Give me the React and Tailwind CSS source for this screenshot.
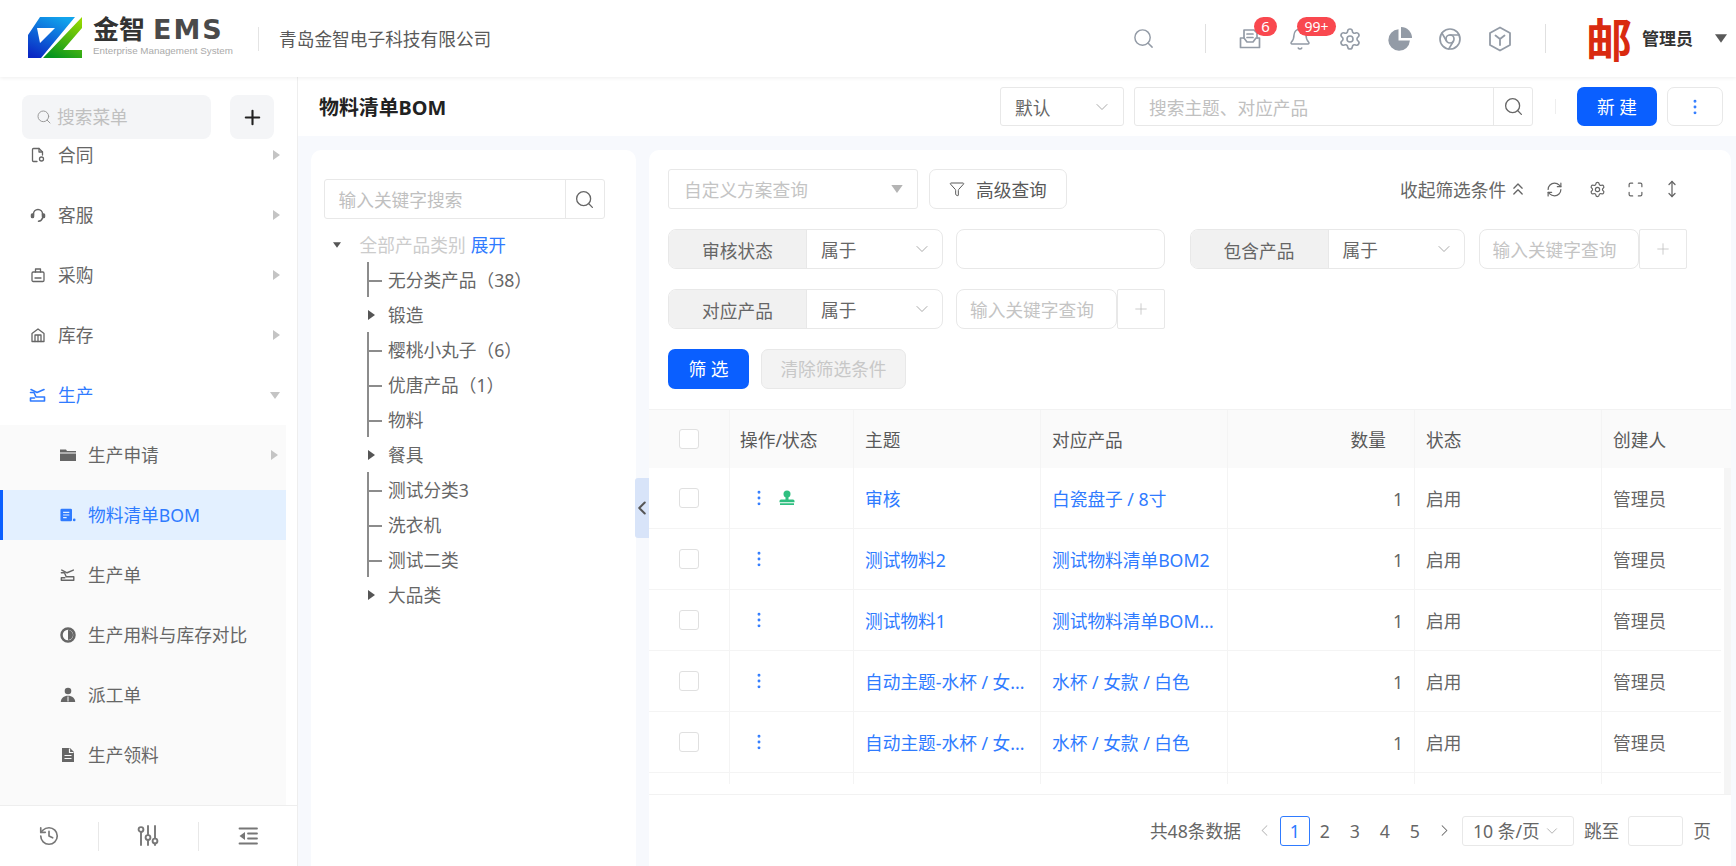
import React from "react";
import { Search, Bell, Settings, Chrome, History, ChevronDown, ChevronLeft, ChevronRight, ChevronsUp, RefreshCw, Maximize, MoveVertical, Filter, Plus, EllipsisVertical } from "lucide-react";

const G = "#939ba6";

function Logo() {
  return (
    <svg width="54" height="42" viewBox="0 0 54 42" className="shrink-0">
      <defs>
        <linearGradient id="lb" x1="0.7" y1="0" x2="0.2" y2="1"><stop offset="0" stopColor="#12a4ec" /><stop offset="1" stopColor="#0a28c4" /></linearGradient>
        <linearGradient id="lg" x1="0.8" y1="0" x2="0.3" y2="1"><stop offset="0" stopColor="#94d800" /><stop offset="1" stopColor="#06951f" /></linearGradient>
      </defs>
      <path fillRule="evenodd" d="M0 18 12 0H47L13 41H0ZM9 11H27L12 26Z" fill="url(#lb)" />
      <path d="M54 0V11L35 33H54V41H15Z" fill="url(#lg)" />
    </svg>
  );
}

function Inbox() {
  return (
    <svg width="24" height="24" viewBox="0 0 24 24" fill="none" stroke={G} strokeWidth="1.7" strokeLinejoin="round" strokeLinecap="round">
      <path d="M6 11V3h10l3 3v5" />
      <path d="M9 7h6M9 10.5h6" />
      <path d="M6 11H2.5v9.5h19V11H18l-3 4H9Z" />
    </svg>
  );
}
function Pie() {
  return (
    <svg width="26" height="26" viewBox="0 0 26 26" fill={G}>
      <path d="M11.5 3.2a10.8 10.8 0 1 0 11.4 11.4H11.5Z" />
      <path d="M14 1a11 11 0 0 1 11 11H14Z" />
    </svg>
  );
}
function HexY() {
  return (
    <svg width="24" height="26" viewBox="0 0 24 26" fill="none" stroke={G} strokeWidth="1.8" strokeLinejoin="round" strokeLinecap="round">
      <path d="M12 1.5 22 7v12l-10 5.5L2 19V7Z" />
      <path d="M7.5 9.5 12 13l4.5-3.5M12 13v6" />
    </svg>
  );
}

const sideProps = { width: 16, height: 16, viewBox: "0 0 16 16", fill: "none", stroke: "currentColor", strokeWidth: 1.3, strokeLinejoin: "round", strokeLinecap: "round" };
function IcContract() {
  return (
    <svg {...sideProps}>
      <path d="M7 14.5H3.5a1 1 0 0 1-1-1v-11a1 1 0 0 1 1-1H9l3.5 3.5v3" />
      <path d="M9 1.5V5h3.5" />
      <circle cx="11.5" cy="12" r="2" />
    </svg>
  );
}
function IcService() {
  return (
    <svg {...sideProps} strokeWidth="1.5">
      <path d="M3.5 8V7a4.5 4.5 0 0 1 9 0v1" />
      <path d="M12.5 11a4.500 4.500 0 0 1-4 3.200" />
      <rect x="1.500" y="7" width="2" height="3.500" rx="0.800" fill="currentColor" />
      <rect x="12.500" y="7" width="2" height="3.500" rx="0.800" fill="currentColor" />
    </svg>
  );
}
function IcBag() {
  return (
    <svg {...sideProps}>
      <rect x="2" y="5" width="12" height="9.500" rx="1.200" />
      <path d="M5.500 5V2h5v3M5 11h6" />
    </svg>
  );
}
function IcStore() {
  return (
    <svg {...sideProps}>
      <path d="M2 6.500 8 2l6 4.500v8H2Z" />
      <path d="M5 14.500V8h6v6.500M8 8v6.500" />
    </svg>
  );
}
function IcProd({ className }) {
  return (
    <svg width="18" height="16" viewBox="0 0 18 16" fill="none" stroke="currentColor" strokeWidth="1.6" strokeLinejoin="round" strokeLinecap="round" className={className}>
      <path d="M2 2.500 8 5.500l7-3" />
      <path d="M1.500 5.500h3.500l2 4.500h8.500v4H1.500v-3h4" />
    </svg>
  );
}
function IcFolder() {
  return (
    <svg width="16" height="16" viewBox="0 0 16 16" fill="currentColor">
      <path d="M0 2.500h6l1 1.500h9v1.500H0ZM0 6.500h16v7.500H0Z" />
    </svg>
  );
}
function IcBom() {
  return (
    <svg width="18" height="16" viewBox="0 0 18 16">
      <rect x="0.500" y="1" width="13" height="14" rx="1.500" fill="currentColor" />
      <path d="M3.500 5h7M3.500 8h7M3.500 11h4" stroke="#e3f0ff" strokeWidth="1.300" />
      <circle cx="16" cy="13.500" r="1.500" fill="currentColor" />
    </svg>
  );
}
function IcHalf() {
  return (
    <svg width="16" height="16" viewBox="0 0 16 16">
      <circle cx="8" cy="8" r="6.500" fill="#fafafa" stroke="currentColor" strokeWidth="2.500" />
      <path d="M8 3a5 5 0 0 1 0 10Z" fill="currentColor" />
    </svg>
  );
}
function IcPerson() {
  return (
    <svg width="16" height="16" viewBox="0 0 16 16" fill="currentColor">
      <circle cx="8" cy="4" r="3.300" />
      <path d="M.8 15c0-3.600 3-6.200 7.200-6.200s7.200 2.600 7.200 6.200Z" />
      <path d="M8 9.500v5" stroke="#fafafa" strokeWidth="1" />
    </svg>
  );
}
function IcStamp({ className }) {
  return (
    <svg width="16" height="16" viewBox="0 0 16 16" fill="currentColor" className={className}>
      <circle cx="8" cy="4" r="3.500" />
      <path d="M6.500 7h3v2.500H14a1.500 1.500 0 0 1 1.500 1.500v1.200H.5V11A1.500 1.500 0 0 1 2 9.500h4.500ZM1 13.300h14V15H1Z" />
    </svg>
  );
}
function IcDoc() {
  return (
    <svg width="16" height="16" viewBox="0 0 16 16">
      <path d="M2 1h8l4 4v10H2Z" fill="currentColor" />
      <path d="M9.500 1.500V5.500h4M4.500 8.500h7M4.500 11.500h7" stroke="#fafafa" strokeWidth="1.200" fill="none" />
    </svg>
  );
}
function IcSliders() {
  return (
    <svg width="22" height="24" viewBox="0 0 22 24" fill="none" stroke="#777" strokeWidth="1.900" strokeLinecap="round">
      <circle cx="4" cy="5.500" r="2.400" />
      <path d="M4 8v13" />
      <path d="M11 2v9" />
      <circle cx="11" cy="13.500" r="2.400" />
      <path d="M11 16v5" />
      <path d="M18 2v12" />
      <circle cx="18" cy="17" r="2.400" />
      <path d="M18 19.500V21" />
    </svg>
  );
}
function IcCollapse() {
  return (
    <svg width="20" height="20" viewBox="0 0 20 20" fill="none" stroke="#777" strokeWidth="1.800" strokeLinecap="round">
      <path d="M1.500 2.500h17.500M10 7.500h9M10 12.500h9M1.500 17.500h17.500" />
      <path d="M7 6v8L1.500 10Z" fill="#777" stroke="none" />
    </svg>
  );
}

function TriRight({ className = "text-[#c4c4c4]" }) {
  return <svg width="7" height="10" viewBox="0 0 7 10" fill="currentColor" className={className}><path d="M0 0l7 5-7 5Z" /></svg>;
}
function TriDown({ className = "text-[#c4c4c4]", w = 10, h = 7 }) {
  return <svg width={w} height={h} viewBox="0 0 10 7" fill="currentColor" className={className}><path d="M0 0h10L5 7Z" /></svg>;
}

function TopMenu({ icon, label, active, open }) {
  return (
    <div className={`h-[60px] flex items-center pl-[29px] pr-[17px] ${active ? "text-[#2f7bff]" : "text-[#666666]"}`}>
      <span className="w-[18px] flex justify-center">{icon}</span>
      <span className="ml-[11px]">{label}</span>
      <span className="ml-auto">{open ? <TriDown /> : <TriRight />}</span>
    </div>
  );
}
function SubMenu({ icon, label, arrow, active }) {
  return (
    <div className="h-[60px] flex items-center">
      <div className={`w-full flex items-center h-[50px] ${active ? "bg-[#e3f0ff] text-[#2f7bff] border-l-[3px] border-[#0a5fff] pl-[57px]" : "text-[#666666] pl-[60px]"} pr-[8px]`}>
        <span className="w-[16px] flex justify-center">{icon}</span>
        <span className="ml-[12px]">{label}</span>
        {arrow && <span className="ml-auto"><TriRight /></span>}
      </div>
    </div>
  );
}

function Sidebar() {
  return (
    <aside className="w-[298px] shrink-0 bg-white border-r border-[#eeeeee] flex flex-col">
      <div className="h-[62px] shrink-0 pt-[18px] pl-[22px] flex gap-[19px] bg-white relative z-10">
        <div className="w-[189px] h-[44px] rounded-[8px] bg-[#f4f5f7] flex items-center pl-[14px] text-[#c0c0c0]">
          <Search size={16} strokeWidth={1.5} className="text-[#9a9a9a]" />
          <span className="ml-[5px]">搜索菜单</span>
        </div>
        <div className="w-[44px] h-[44px] rounded-[8px] bg-[#f4f5f7] flex items-center justify-center">
          <Plus size={23} strokeWidth={2.2} className="text-[#222222]" />
        </div>
      </div>
      <div className="flex-1 overflow-hidden">
        <div className="-mt-[14px]">
          <TopMenu icon={<IcContract />} label="合同" />
          <TopMenu icon={<IcService />} label="客服" />
          <TopMenu icon={<IcBag />} label="采购" />
          <TopMenu icon={<IcStore />} label="库存" />
          <TopMenu icon={<IcProd />} label="生产" active open />
          <div className="w-[286px] bg-[#fafafa] h-[380px]">
            <SubMenu icon={<IcFolder />} label="生产申请" arrow />
            <SubMenu icon={<IcBom />} label="物料清单BOM" active />
            <SubMenu icon={<IcProd />} label="生产单" />
            <SubMenu icon={<IcHalf />} label="生产用料与库存对比" />
            <SubMenu icon={<IcPerson />} label="派工单" />
            <SubMenu icon={<IcDoc />} label="生产领料" />
          </div>
        </div>
      </div>
      <div className="h-[61px] shrink-0 border-t border-[#eeeeee] flex items-center">
        <div className="flex-1 flex justify-center"><History size={22} strokeWidth={1.8} className="text-[#777777]" /></div>
        <div className="w-px h-[29px] bg-[#e8e8e8]" />
        <div className="flex-1 flex justify-center"><IcSliders /></div>
        <div className="w-px h-[29px] bg-[#e8e8e8]" />
        <div className="flex-1 flex justify-center"><IcCollapse /></div>
      </div>
    </aside>
  );
}

function Header() {
  return (
    <header className="h-[77px] shrink-0 bg-white flex items-center shadow-[0_1px_4px_rgba(0,0,0,0.07)] relative z-20">
      <div className="ml-[28px] -mt-[2px]"><Logo /></div>
      <div className="ml-[11px] w-[155px] -mt-[6px] flex flex-col">
        <div className="flex items-center h-[30px] leading-none">
          <span className="text-[26px] font-bold text-[#333333]">金智</span>
          <span className="ml-[8px] text-[27px] font-bold text-[#4a4a4a] tracking-[2px] font-['DejaVu_Sans',sans-serif]">EMS</span>
        </div>
        <span className="text-[9.800px] leading-[12px] mt-[1px] text-[#aaaaaa] whitespace-nowrap font-['Liberation_Sans',sans-serif]">Enterprise Management System</span>
      </div>
      <div className="ml-[10px] w-px h-[24px] bg-[#e4e4e4]" />
      <span className="ml-[20px] text-[#595959]">青岛金智电子科技有限公司</span>
      <div className="ml-auto flex items-center pr-[9px]">
        <Search size={23} strokeWidth={1.5} className="text-[#939ba6]" />
        <div className="ml-[50px] w-px h-[29px] bg-[#e0e0e0]" />
        <div className="ml-[19px] flex items-center">
          <div className="w-[50px] flex justify-center relative">
            <Inbox />
            <span className="absolute -top-[10px] left-[29px] w-[23px] h-[19px] rounded-full bg-[#f9484f] text-white text-[15px] leading-[19px] text-center">6</span>
          </div>
          <div className="w-[50px] flex justify-center relative">
            <Bell size={24} strokeWidth={1.5} className="text-[#939ba6]" />
            <span className="absolute -top-[10px] left-[22px] w-[39px] h-[19px] rounded-full bg-[#f9484f] text-white text-[14px] leading-[19px] text-center">99+</span>
          </div>
          <div className="w-[50px] flex justify-center"><Settings size={24} strokeWidth={1.6} className="text-[#939ba6]" /></div>
          <div className="w-[50px] flex justify-center"><Pie /></div>
          <div className="w-[50px] flex justify-center"><Chrome size={24} strokeWidth={1.7} className="text-[#939ba6]" /></div>
          <div className="w-[50px] flex justify-center"><HexY /></div>
        </div>
        <div className="ml-[20px] w-px h-[29px] bg-[#e0e0e0]" />
        <span className="ml-[40px] w-[46px] text-[46px] leading-[50px] text-[#d92a10] font-bold">邮</span>
        <span className="ml-[10px] text-[17px] font-bold text-[#333333]">管理员</span>
        <span className="ml-[22px]"><TriDown className="text-[#595959]" w={12} h={9} /></span>
      </div>
    </header>
  );
}

function TopBar() {
  const b = "border-[1.5px] border-[#e8e8e8]";
  return (
    <div className="h-[59px] shrink-0 bg-white flex items-center pl-[21px] pr-[13px]">
      <span className="font-bold text-[#222222] text-[19.900px] pt-[2px]">物料清单BOM</span>
      <div className={`ml-auto w-[124px] h-[39px] rounded-[3px] ${b} flex items-center pl-[14px] pr-[11px] text-[#666666]`}>
        <span className="pt-[3px]">默认</span>
        <ChevronDown size={20} strokeWidth={1} className="ml-auto text-[#999999]" />
      </div>
      <div className={`ml-[10px] w-[399px] h-[39px] rounded-[3px] ${b} flex items-center`}>
        <span className="flex-1 pl-[14px] text-[#c0c0c0] pt-[3px]">搜索主题、对应产品</span>
        <span className="w-[39px] h-full border-l-[1.5px] border-[#e8e8e8] flex items-center justify-center"><Search size={21} strokeWidth={1.5} className="text-[#666666]" /></span>
      </div>
      <div className="ml-[22px] w-px h-[15px] bg-[#eeeeee]" />
      <button className="ml-[21px] w-[80px] h-[39px] rounded-[7px] bg-[#0a5fff] text-white">新 建</button>
      <div className={`ml-[10px] w-[56px] h-[39px] rounded-[7px] ${b} flex items-center justify-center`}>
        <EllipsisVertical size={20} strokeWidth={1.5} className="text-[#2f7bff]" />
      </div>
    </div>
  );
}

const tree = [
  ["leaf", "无分类产品（38）"],
  ["node", "锻造"],
  ["leaf", "樱桃小丸子（6）"],
  ["leaf", "优唐产品（1）"],
  ["leaf", "物料"],
  ["node", "餐具"],
  ["leaf", "测试分类3"],
  ["leaf", "洗衣机"],
  ["leaf", "测试二类"],
  ["node", "大品类"],
];

function TreeCard() {
  return (
    <div className="w-[325px] shrink-0 bg-white rounded-t-[10px] pt-[29px] pl-[12.500px]">
      <div className="w-[281px] h-[40px] rounded-[3px] border-[1.5px] border-[#e8e8e8] flex items-center">
        <span className="flex-1 pl-[14px] text-[#c0c0c0] pt-[2px]">输入关键字搜索</span>
        <span className="w-[39px] h-full border-l-[1.5px] border-[#e8e8e8] flex items-center justify-center"><Search size={21} strokeWidth={1.5} className="text-[#666666]" /></span>
      </div>
      <div className="mt-[8px]">
        <div className="h-[35px] flex items-center">
          <span className="ml-[9px] w-[14px]"><TriDown className="text-[#555555]" w={8} h={6} /></span>
          <span className="ml-[13px] text-[#cccccc]">全部产品类别</span>
          <span className="ml-[5px] text-[#2f7bff]">展开</span>
        </div>
        {tree.map(([t, l]) => (
          <div key={l} className="h-[35px] flex items-center text-[#666666]">
            {t === "leaf" ? (
              <span className="ml-[43.500px] w-[21px] h-full relative border-l-[2px] border-[#8c8c8c]">
                <span className="absolute top-1/2 left-0 w-[13px] h-[2px] bg-[#8c8c8c]" />
              </span>
            ) : (
              <span className="ml-[44.500px] w-[20px] flex"><TriRight className="text-[#555555]" /></span>
            )}
            <span>{l}</span>
          </div>
        ))}
      </div>
    </div>
  );
}

const box = "border-[1.5px] border-[#e8e8e8]";
function Group({ label, w }) {
  return (
    <div className={`${w} h-[40px] rounded-[8px] ${box} flex overflow-hidden`}>
      <span className="w-[138px] shrink-0 bg-[#f1f1f1] border-r-[1.5px] border-[#e8e8e8] flex items-center justify-center text-[#666666] pt-[3px]">{label}</span>
      <span className="flex-1 flex items-center pl-[14px] pr-[10px] text-[#666666]">
        <span className="pt-[1px]">属于</span>
        <ChevronDown size={20} strokeWidth={1} className="ml-auto text-[#999999]" />
      </span>
    </div>
  );
}
function KeyInput({ w }) {
  return (
    <>
      <div className={`${w} h-[40px] rounded-[8px] ${box} flex items-center pl-[13px] pt-[2px] text-[#c4c4c4] whitespace-nowrap overflow-hidden`}>输入关键字查询</div>
      <div className={`w-[48px] h-[40px] rounded-[2px] ${box} flex items-center justify-center`}>
        <Plus size={18} strokeWidth={1} className="text-[#bbbbbb]" />
      </div>
    </>
  );
}

function Filters() {
  return (
    <div className="pt-[19px] pl-[19px] flex flex-col gap-[20px] h-[259px] shrink-0">
      <div className="h-[40px] flex items-center">
        <div className={`w-[250px] h-[40px] rounded-[3px] ${box} flex items-center pl-[15px] pr-[14px] text-[#c4c4c4]`}>
          <span className="pt-[2px]">自定义方案查询</span>
          <span className="ml-auto"><TriDown className="text-[#b4b4b4]" w={12} h={8} /></span>
        </div>
        <div className={`ml-[11px] w-[138px] h-[40px] rounded-[7px] ${box} flex items-center pl-[19px] text-[#595959]`}>
          <Filter size={16} strokeWidth={1.5} />
          <span className="ml-[11px] pt-[2px]">高级查询</span>
        </div>
        <span className="ml-[333px] text-[#666666] pt-[2px]">收起筛选条件</span>
        <ChevronsUp size={20} strokeWidth={1.6} className="ml-[2px] text-[#666666]" />
        <RefreshCw size={17} strokeWidth={1.7} className="ml-[18px] text-[#666666]" />
        <Settings size={17} strokeWidth={1.7} className="ml-[26px] text-[#666666]" />
        <Maximize size={17} strokeWidth={1.7} className="ml-[21px] text-[#666666]" />
        <MoveVertical size={18} strokeWidth={1.7} className="ml-[19px] text-[#666666]" />
      </div>
      <div className="h-[40px] flex">
        <Group label="审核状态" w="w-[275px]" />
        <div className={`ml-[13px] w-[209px] h-[40px] rounded-[8px] ${box}`} />
        <div className="ml-[24.500px]"><Group label="包含产品" w="w-[275px]" /></div>
        <div className="ml-[14px] flex"><KeyInput w="w-[160px]" /></div>
      </div>
      <div className="h-[40px] flex">
        <Group label="对应产品" w="w-[275px]" />
        <div className="ml-[13px] flex"><KeyInput w="w-[161px]" /></div>
      </div>
      <div className="h-[40px] flex">
        <button className="w-[81px] h-[40px] rounded-[7px] bg-[#0a5fff] text-white">筛 选</button>
        <button className={`ml-[12px] w-[145px] h-[40px] rounded-[7px] ${box} bg-[#f3f3f3] text-[#c8c8c8]`}>清除筛选条件</button>
      </div>
    </div>
  );
}

const cols = ["w-[81px]", "w-[124px]", "w-[187px]", "w-[187px]", "w-[187px]", "w-[187px]", "w-[119px]"];
const rows = [
  ["审核", "白瓷盘子 / 8寸", true],
  ["测试物料2", "测试物料清单BOM2"],
  ["测试物料1", "测试物料清单BOM..."],
  ["自动主题-水杯 / 女...", "水杯 / 女款 / 白色"],
  ["自动主题-水杯 / 女...", "水杯 / 女款 / 白色"],
];
const cellB = "border-r-[1.5px] border-[#f4f4f4] h-full flex items-center";

function CheckBox() {
  return <span className="w-[20px] h-[20px] rounded-[3px] border-[1.5px] border-[#e0e0e0] bg-white" />;
}

function Table() {
  return (
    <div className="h-[386px] shrink-0 border-y-[1.5px] border-[#f2f2f2] flex flex-col">
      <div className="h-[58px] shrink-0 bg-[#fafafa] flex text-[#595959]">
        <div className={`${cols[0]} ${cellB} justify-center pr-[1px]`}><CheckBox /></div>
        <div className={`${cols[1]} ${cellB} pl-[10px] pt-[2px]`}>操作/状态</div>
        <div className={`${cols[2]} ${cellB} pl-[11px] pt-[2px]`}>主题</div>
        <div className={`${cols[3]} ${cellB} pl-[11px] pt-[2px]`}>对应产品</div>
        <div className={`${cols[4]} ${cellB} justify-end pr-[28px] pt-[2px]`}>数量</div>
        <div className={`${cols[5]} ${cellB} pl-[11px] pt-[2px]`}>状态</div>
        <div className={`${cols[6]} h-full flex items-center pl-[11px] pt-[2px]`}>创建人</div>
      </div>
      <div className="flex flex-1 overflow-hidden">
        <div className="w-[1072px]">
          {rows.map(([a, b, stamp], i) => (
            <div key={i} className="h-[61px] flex border-b-[1.5px] border-[#f4f4f4] text-[#666666]">
              <div className={`${cols[0]} ${cellB} justify-center pr-[1px]`}><CheckBox /></div>
              <div className={`${cols[1]} ${cellB} pl-[19px]`}>
                <EllipsisVertical size={20} strokeWidth={1.5} className="text-[#2f7bff]" />
                {stamp && <IcStamp className="ml-[10px] text-[#2fbf80]" />}
              </div>
              <div className={`${cols[2]} ${cellB} pl-[11px] pt-[2px] text-[#2f7bff] whitespace-nowrap`}>{a}</div>
              <div className={`${cols[3]} ${cellB} pl-[11px] pt-[2px] text-[#2f7bff] whitespace-nowrap`}>{b}</div>
              <div className={`${cols[4]} ${cellB} justify-end pr-[11px] pt-[2px]`}>1</div>
              <div className={`${cols[5]} ${cellB} pl-[11px] pt-[2px]`}>启用</div>
              <div className={`${cols[6]} h-full flex items-center pl-[11px] pt-[2px]`}>管理员</div>
            </div>
          ))}
          <div className="h-[11px] flex">
            <div className={`${cols[0]} ${cellB}`} />
            <div className={`${cols[1]} ${cellB}`} />
            <div className={`${cols[2]} ${cellB}`} />
            <div className={`${cols[3]} ${cellB}`} />
            <div className={`${cols[4]} ${cellB}`} />
            <div className={`${cols[5]} ${cellB}`} />
          </div>
        </div>
        <div className="w-[10px] flex justify-end"><div className="w-[7px] h-full bg-[#f5f5f5]" /></div>
      </div>
    </div>
  );
}

function Pager() {
  return (
    <div className="flex-1 flex items-center justify-end pr-[20px] text-[#666666]">
      <span>共48条数据</span>
      <ChevronLeft size={19} strokeWidth={1.3} className="ml-[14px] text-[#bbbbbb]" />
      <span className="ml-[6px] w-[30px] h-[30px] rounded-[3px] border-[1.5px] border-[#2f7bff] text-[#2f7bff] flex items-center justify-center">1</span>
      {["2", "3", "4", "5"].map((n) => (
        <span key={n} className="w-[30px] text-center">{n}</span>
      ))}
      <ChevronRight size={19} strokeWidth={1.3} className="ml-[5px] text-[#666666]" />
      <span className={`ml-[8px] w-[112px] h-[30px] rounded-[3px] ${box} flex items-center pl-[10px] whitespace-nowrap`}>
        10 条/页
        <ChevronDown size={18} strokeWidth={1} className="ml-[3px] text-[#999999]" />
      </span>
      <span className="ml-[10px]">跳至</span>
      <span className={`ml-[9px] w-[55px] h-[30px] rounded-[3px] ${box}`} />
      <span className="ml-[10px]">页</span>
    </div>
  );
}

export default function App() {
  return (
    <div className="w-[1736px] h-screen flex flex-col overflow-hidden bg-white text-[17.700px] leading-[24px] font-['Noto_Sans','Noto_Sans_CJK_SC',sans-serif]">
      <Header />
      <div className="flex-1 flex min-h-0">
        <Sidebar />
        <main className="flex-1 flex flex-col min-w-0 bg-[#f7f9fd]">
          <TopBar />
          <div className="flex-1 flex pt-[14px] pl-[13px] min-h-0">
            <TreeCard />
            <div className="w-[13px] shrink-0 relative">
              <div className="absolute left-[-1px] top-[328px] w-[14px] h-[60px] rounded-l-[3px] bg-[#d8e4f9] flex items-center justify-center">
                <ChevronLeft size={22} strokeWidth={2.2} className="shrink-0 text-[#555555]" />
              </div>
            </div>
            <section className="w-[1082px] shrink-0 bg-white rounded-t-[10px] flex flex-col">
              <Filters />
              <Table />
              <Pager />
            </section>
          </div>
        </main>
      </div>
    </div>
  );
}
